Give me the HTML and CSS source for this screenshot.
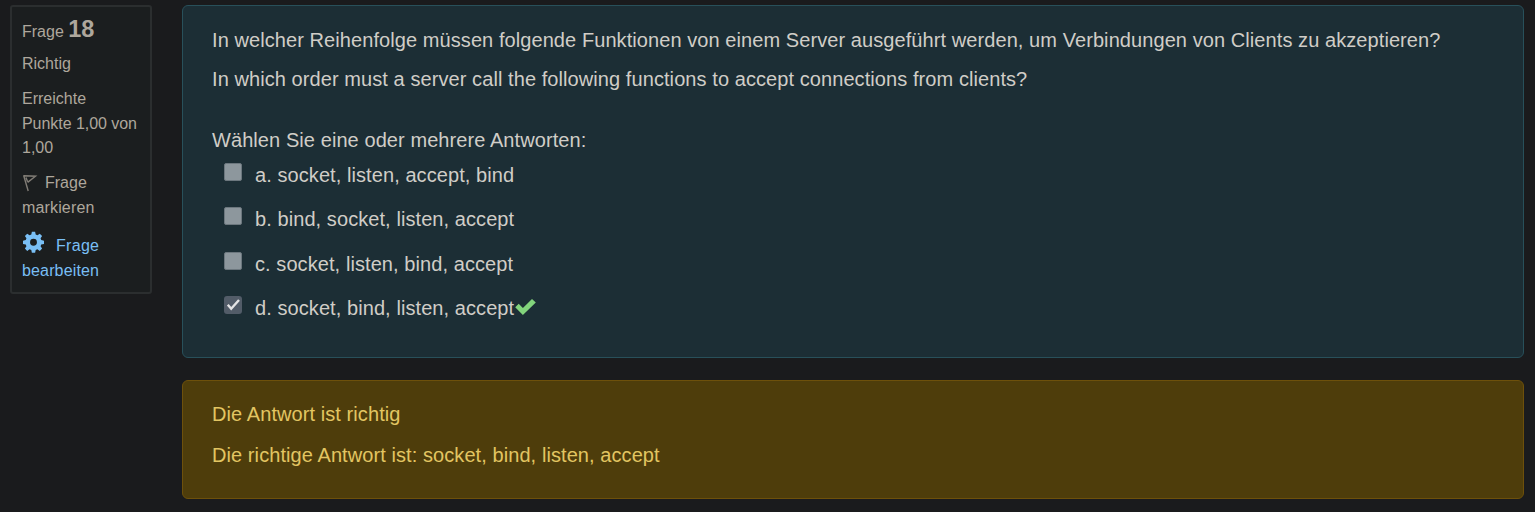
FILE: index.html
```html
<!DOCTYPE html>
<html lang="de">
<head>
<meta charset="utf-8">
<title>Frage 18</title>
<link rel="stylesheet" href="styles.css">
</head>
<body>
<main class="question">
  <aside class="info">
    <h3 class="number">Frage <strong>18</strong></h3>
    <div class="state">Richtig</div>
    <div class="grade"><span>Erreichte</span><br><span class="points">Punkte 1,00 von</span><br><span>1,00</span></div>
    <div class="flag"><svg class="flag-icon" viewBox="0 0 16 18"><path d="M1.6 1.2 6.2 17M2.2 1.8 13.5 2.2 5.6 8.4M4 3.5 5.5 7.5" fill="none" stroke="currentColor" stroke-width="1.4"/></svg><span>Frage</span><br><span class="mark">markieren</span></div>
    <a class="edit"><svg class="gear-icon" viewBox="0 0 22 23"><path fill="currentColor" fill-rule="evenodd" d="M9.3.8h3.4l.6 2.9 1.8.7 2.5-1.6 2.4 2.4-1.6 2.5.7 1.8 2.9.6v3.4l-2.9.6-.7 1.8 1.6 2.5-2.4 2.4-2.5-1.6-1.8.7-.6 2.9H9.3l-.6-2.9-1.8-.7-2.5 1.6L2 18.4l1.6-2.5-.7-1.8L0 13.5v-3.4l2.9-.6.7-1.8L2 5.2l2.4-2.4 2.5 1.6 1.8-.7zM11 8.1a3.6 3.6 0 1 0 0 7.2 3.6 3.6 0 0 0 0-7.2z"/></svg><span class="edit-word">Frage</span><br><span class="edit-line">bearbeiten</span></a>
  </aside>
  <div class="content">
    <section class="formulation">
      <p><span>In welcher Reihenfolge müssen folgende Funktionen von einem Server ausgeführt werden, um Verbindungen von Clients zu akzeptieren?</span></p>
      <p><span>In which order must a server call the following functions to accept connections from clients?</span></p>
      <div class="prompt"><span>Wählen Sie eine oder mehrere Antworten:</span></div>
      <div class="answers">
        <label class="answer"><i class="box"></i><span>a. socket, listen, accept, bind</span></label>
        <label class="answer"><i class="box"></i><span>b. bind, socket, listen, accept</span></label>
        <label class="answer"><i class="box"></i><span>c. socket, listen, bind, accept</span></label>
        <label class="answer"><i class="box checked"><svg viewBox="0 0 18 18"><path d="M3.8 8.8 7.2 12.7 15 4" fill="none" stroke="currentColor" stroke-width="2.4"/></svg></i><span>d. socket, bind, listen, accept</span><svg class="correct" viewBox="0 0 21 16"><path fill="currentColor" d="M.2 8.2 3.7 4.8 7.9 8.9 17 .1 20.8 3.6 7.9 16z"/></svg></label>
      </div>
    </section>
    <section class="feedback">
      <p><span>Die Antwort ist richtig</span></p>
      <p><span>Die richtige Antwort ist: socket, bind, listen, accept</span></p>
    </section>
  </div>
</main>
</body>
</html>
```
FILE: styles.css
```css
* { box-sizing: border-box; }
body {
  margin: 0;
  height: 512px;
  overflow: hidden;
  background: #1a1b1d;
  color: #d0cdc7;
  font: 20px/30px "Liberation Sans", Arial, sans-serif;
  letter-spacing: 0.077px;
}
p { margin: 0; }
.question {
  display: flex;
  align-items: flex-start;
  gap: 30px;
  padding: 5px 11px 0 10px;
}
.info {
  width: 142px;
  height: 289px;
  flex: none;
  padding: 10px 0 0 10px;
  border: 2px solid #2b2e2f;
  border-radius: 3px;
  background: #1b1e1f;
  color: #aea79c;
  font-size: 16px;
  letter-spacing: 0;
  line-height: 24.5px;
  white-space: nowrap;
}
.number { margin: 0; font-size: 16px; font-weight: normal; line-height: 24px; height: 35px; }
.number strong { font-size: 23.5px; line-height: 24px; }
.state { height: 35px; }
.grade { height: 84px; }
.points { letter-spacing: -0.05px; }
.mark { letter-spacing: 0.15px; }
.flag { height: 60px; }
.flag-icon { width: 16px; height: 18px; margin-right: 7px; vertical-align: -4px; color: #817d76; }
.edit { color: #79bff5; display: block; }
.gear-icon { width: 21px; height: 22px; margin: 0 12px 0 1px; vertical-align: -2px; }
.edit-word { letter-spacing: 0.3px; }
.edit-line { letter-spacing: 0.15px; }
.content { flex: 1; }
.formulation, .feedback {
  padding-left: 29px;
  border: 1px solid #28505a;
  border-radius: 6px;
  white-space: nowrap;
}
.formulation { height: 353px; padding-top: 19px; background: #1c2e35; }
.formulation p { height: 39px; }
.prompt { margin-top: 22px; height: 34.5px; }
.answers { display: grid; grid-auto-rows: 44.6px; padding-left: 12px; }
.answer { display: flex; align-items: flex-start; }
.box {
  width: 18px;
  height: 18px;
  margin: 3px 13px 0 0;
  border: 1px solid #6c777e;
  border-radius: 2px;
  background: #8d979d;
  flex: none;
}
.checked { border: 0; border-radius: 3px; background: #525c68; color: #e3e3e4; }
.checked svg { display: block; width: 18px; height: 18px; }
.correct { width: 21px; height: 16px; margin: 6px 0 0 1px; color: #82d47c; }
.feedback {
  height: 119px;
  margin-top: 22px;
  padding-top: 18px;
  border-color: #6d500b;
  background: #4e3d0b;
  color: #e2c562;
}
.feedback p { height: 40.5px; }
```
